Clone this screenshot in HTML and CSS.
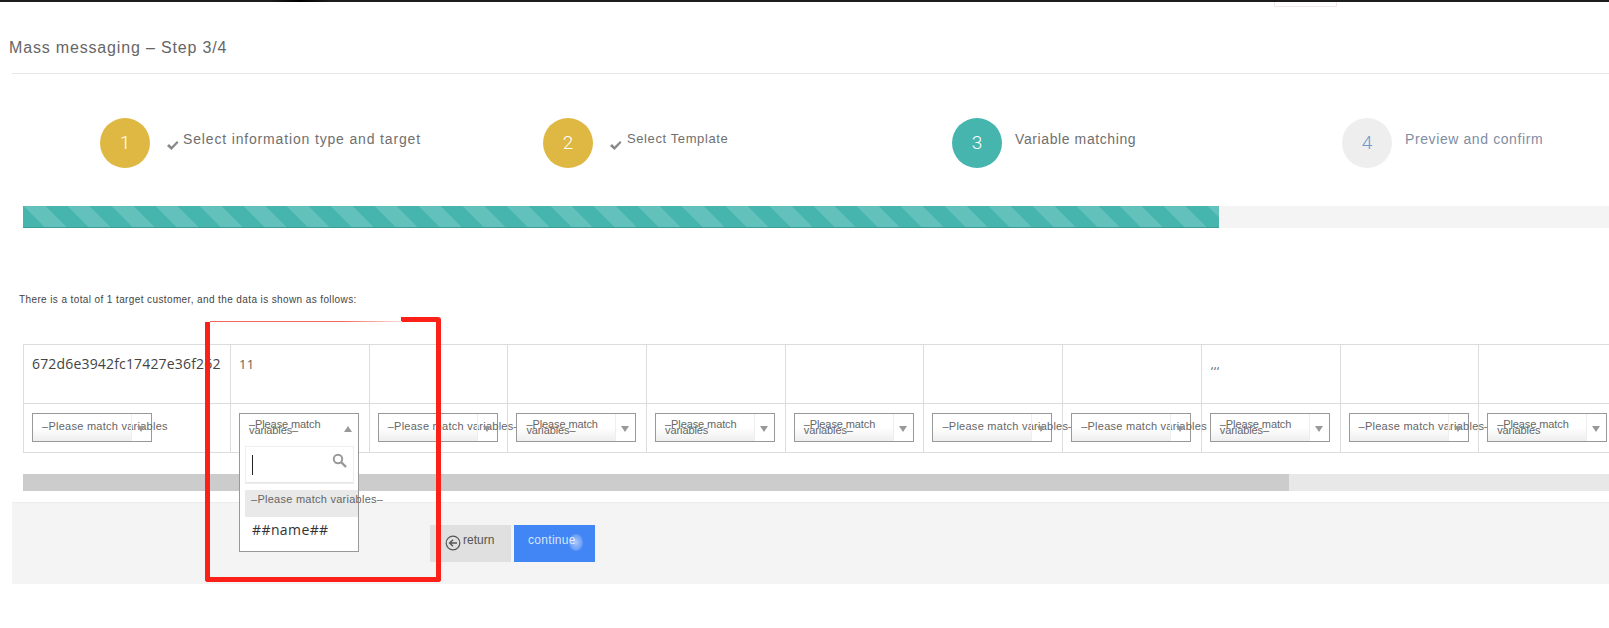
FILE: index.html
```html
<!DOCTYPE html>
<html lang="en">
<head>
  <meta charset="UTF-8" />
  <meta name="viewport" content="width=device-width, initial-scale=1.0" />
  <title>Mass messaging - Step 3/4</title>
  <link rel="stylesheet" href="styles.css">
</head>
<body>

<div class="top-bar"></div>
<div class="top-tab"></div>

<div class="page-head">
  <h1>Mass messaging – Step 3/4</h1>
</div>

<div class="steps">
  <div class="step done">
    <span class="step-num">1</span>
    <span class="step-check"><svg width="13" height="11" viewBox="0 0 13 11"><path d="M1 6l2-2 2.5 2.5L11 1l1.500 1.500L5.500 10z" fill="#888"/></svg></span>
    <span class="step-label">Select information type and target</span>
  </div>
  <div class="step done">
    <span class="step-num">2</span>
    <span class="step-check"><svg width="13" height="11" viewBox="0 0 13 11"><path d="M1 6l2-2 2.500 2.500L11 1l1.500 1.500L5.500 10z" fill="#888"/></svg></span>
    <span class="step-label short">Select Template</span>
  </div>
  <div class="step active">
    <span class="step-num">3</span>
    <span class="step-label">Variable matching</span>
  </div>
  <div class="step todo">
    <span class="step-num">4</span>
    <span class="step-label">Preview and confirm</span>
  </div>
</div>

<div class="progress"><div class="progress-fill"></div></div>

<p class="intro">There is a total of 1 target customer, and the data is shown as follows:</p>

<table class="data-table">
  <colgroup>
    <col class="col-id">
    <col><col><col><col><col><col><col><col><col><col>
  </colgroup>
  <tr class="data-row">
    <td>672d6e3942fc17427e36f262</td>
    <td class="num">11</td>
    <td></td><td></td><td></td><td></td><td></td><td></td>
    <td class="commas">,,,</td>
    <td></td><td></td>
  </tr>
  <tr class="select-row">
    <td><div class="picker"><span class="picker-text line">–Please match variables</span><span class="picker-arrow"></span></div></td>
    <td>
      <div class="picker open">
        <span class="picker-text">–Please match variables–</span><span class="picker-arrow"></span>
        <div class="dropdown">
          <div class="search">
            <span class="caret"></span>
            <svg class="search-icon" width="15" height="15" viewBox="0 0 15 15"><circle cx="6" cy="6" r="4.200" fill="none" stroke="#999" stroke-width="2"/><path d="M9 9l5 5" stroke="#999" stroke-width="2.400"/></svg>
          </div>
          <div class="option current">–Please match variables–</div>
          <div class="option">##name##</div>
        </div>
      </div>
    </td>
    <td><div class="picker"><span class="picker-text line">–Please match variables–</span><span class="picker-arrow"></span></div></td>
    <td><div class="picker"><span class="picker-text">–Please match variables–</span><span class="picker-arrow"></span></div></td>
    <td><div class="picker"><span class="picker-text">–Please match variables</span><span class="picker-arrow"></span></div></td>
    <td><div class="picker"><span class="picker-text">–Please match variables–</span><span class="picker-arrow"></span></div></td>
    <td><div class="picker"><span class="picker-text line">–Please match variables–</span><span class="picker-arrow"></span></div></td>
    <td><div class="picker"><span class="picker-text line">–Please match variables</span><span class="picker-arrow"></span></div></td>
    <td><div class="picker"><span class="picker-text">–Please match variables–</span><span class="picker-arrow"></span></div></td>
    <td><div class="picker"><span class="picker-text line">–Please match variables–</span><span class="picker-arrow"></span></div></td>
    <td><div class="picker"><span class="picker-text">–Please match variables</span><span class="picker-arrow"></span></div></td>
  </tr>
</table>

<div class="scrollbar"><div class="scroll-thumb"></div></div>

<div class="footer">
  <button class="btn btn-return">
    <svg width="16" height="16" viewBox="0 0 16 16"><circle cx="8" cy="8" r="6.800" fill="none" stroke="#555" stroke-width="1.200"/><path d="M12 8H5M8 4.800L4.600 8 8 11.200" fill="none" stroke="#555" stroke-width="1.400"/></svg>
    <span>return</span>
  </button>
  <button class="btn btn-continue">continue<span class="cursor-spot"></span></button>
</div>

<!-- red annotation drawn over the screenshot -->
<div class="mark"></div>

</body>
</html>
```

FILE: styles.css
```css
html, body {
  height: 628px;
  overflow: hidden;
}

body {
  margin: 0;
  position: relative;
  background: #fff;
  font-family: "Liberation Sans", Arial, sans-serif;
  color: #555;
}

.top-bar {
  height: 2px;
  background: linear-gradient(90deg, #1c1c1c 270px, #000 300px, #1c1c1c 330px);
}

.top-tab {
  width: 61px;
  height: 4px;
  margin-left: 1274px;
  border: 1px solid #f3e6ea;
  border-top: none;
}

.page-head {
  height: 66px;
  margin-left: 12px;
  border-bottom: 1px solid #e8e8e8;
}

.page-head h1 {
  margin: 0 0 0 -3px;
  padding-top: 31px;
  font-size: 16px;
  line-height: 20px;
  font-weight: normal;
  letter-spacing: 0.830px;
  color: #666;
}

/* steps */
.steps {
  display: grid;
  grid-template-columns: 443px 409px 390px 1fr;
  padding-left: 100px;
  margin-top: 44px;
}

.step {
  display: flex;
  align-items: flex-start;
}

.step-num {
  flex: none;
  width: 50px;
  height: 50px;
  border-radius: 50%;
  font-family: Roboto, sans-serif;
  font-weight: 300;
  font-size: 19px;
  line-height: 50px;
  text-align: center;
  color: #fff;
}

.done .step-num { background: #dfb844; }
.active .step-num { background: #45b5ae; }
.todo .step-num { background: #eee; color: #6c9bcb; }

.step-check {
  margin: 22px 4px 0 16px;
  line-height: 11px;
}

.step-label {
  margin: 12px 0 0 13px;
  font-size: 14px;
  line-height: 18px;
  letter-spacing: 0.600px;
  color: #6f6f6f;
}

.done .step-label { margin-left: 0; letter-spacing: 0.840px; }
.done .step-label.short { font-size: 13px; margin-left: 1px; letter-spacing: 0.600px; }
.todo .step-label { color: #7f8da3; }

/* progress */
.progress {
  height: 22px;
  margin: 38px 0 0 23px;
  background: #f4f4f4;
}

.progress-fill {
  width: 1196px;
  height: 22px;
  box-sizing: border-box;
  border-bottom: 1px solid #3a9d97;
  background: repeating-linear-gradient(45deg, #45b5ae 0, #45b5ae 15.500px, #63c1bb 15.500px, #63c1bb 31px);
}

.intro {
  margin: 66px 0 0 19px;
  font-size: 10px;
  line-height: 12px;
  letter-spacing: 0.390px;
  color: #444;
}

/* table */
.data-table {
  width: 1594px;
  margin: 38px 0 0 23px;
  table-layout: fixed;
  border-collapse: collapse;
}

.data-table col { width: 138.700px; }
.data-table col.col-id { width: 207px; }

.data-table td {
  border: 1px solid #dcdcdc;
  box-sizing: border-box;
  padding: 0 0 0 8px;
  vertical-align: top;
}

.data-row td {
  height: 59px;
  padding-top: 9px;
  font-family: "Open Sans", sans-serif;
  font-size: 14px;
  line-height: 20px;
  letter-spacing: 0.170px;
  color: #444;
}

.data-row td.num { color: #665; font-size: 13px; letter-spacing: 0.250px; }
.data-row td.commas { font-size: 11px; padding-top: 10px; padding-left: 9px; }

.select-row td {
  height: 49px;
  padding-top: 9px;
}

.picker {
  position: relative;
  display: flex;
  width: 120px;
  height: 29px;
  box-sizing: border-box;
  border: 1px solid #999;
  background: #fff;
}

.picker-text {
  flex: 1;
  min-width: 0;
  padding: 7px 0 0 9px;
  font-size: 11px;
  line-height: 6px;
  letter-spacing: -0.100px;
  color: #666;
  background: linear-gradient(#fff 50%, #eee);
}

.picker-text.line {
  padding-top: 5px;
  font-size: 11px;
  line-height: 14px;
  white-space: nowrap;
  letter-spacing: 0.260px;
}

.picker-arrow {
  position: relative;
  flex: none;
  width: 19px;
  border-left: 1px solid #eee;
}

.picker-arrow::after {
  content: "";
  position: absolute;
  left: 5px;
  top: 12px;
  border: 4px solid transparent;
  border-top: 6px solid #999;
  border-bottom: none;
}

.open.picker {
  border-bottom: none;
  z-index: 2;
}

.open .picker-text { background: #fff; }
.open .picker-arrow { border-left: none; }

.open .picker-arrow::after {
  border-top: none;
  border-bottom: 6px solid #999;
}

.dropdown {
  position: absolute;
  left: -1px;
  top: 28px;
  width: 118px;
  height: 109px;
  border: 1px solid #999;
  border-top: none;
  background: #fff;
}

.search {
  position: relative;
  height: 36px;
  margin: 4px 4px 0 5px;
  border: 1px solid #eee;
  box-shadow: inset 0 -1px 0 #e4e4e4;
}

.caret {
  position: absolute;
  left: 6px;
  top: 8px;
  width: 1px;
  height: 20px;
  background: #222;
}

.search-icon {
  position: absolute;
  right: 6px;
  top: 6px;
}

.option {
  height: 26px;
  margin-left: 5px;
  padding-left: 7px;
  font-family: "Open Sans", sans-serif;
  font-size: 14px;
  line-height: 25px;
  letter-spacing: 0.400px;
  white-space: nowrap;
  color: #333;
}

.option.current {
  height: 27px;
  margin-top: 6px;
  padding-left: 6px;
  font-family: "Liberation Sans", Arial, sans-serif;
  font-size: 11px;
  line-height: 18px;
  letter-spacing: 0.260px;
  color: #666;
  background: #e9e9e9;
}

/* scroll + footer */
.scrollbar {
  height: 17px;
  margin: 21px 0 0 23px;
  background: #e8e8e8;
}

.scroll-thumb {
  width: 1266px;
  height: 17px;
  background: #ccc;
}

.footer {
  display: flex;
  gap: 3px;
  height: 82px;
  box-sizing: border-box;
  margin: 11px 0 0 12px;
  padding: 22px 0 0 418px;
  background: #f4f4f4;
  border-top: 1px solid #ececec;
}

.btn {
  position: relative;
  display: flex;
  align-items: flex-start;
  width: 81px;
  height: 37px;
  border: none;
  padding: 8px 0 0 15px;
  font-family: "Liberation Sans", Arial, sans-serif;
  font-size: 12px;
  line-height: 14px;
}

.btn-return {
  gap: 2px;
  background: #e0e0e0;
  color: #555;
}

.btn-return svg { margin-top: 2px; }

.btn-continue {
  padding-left: 14px;
  background: #4285f4;
  color: #d6e4fb;
  letter-spacing: 0.300px;
}

.cursor-spot {
  position: absolute;
  left: 55px;
  top: 9px;
  width: 14px;
  height: 17px;
  border-radius: 50%;
  background: radial-gradient(rgba(255, 255, 255, 0.55), rgba(255, 255, 255, 0));
}

/* annotation */
.mark {
  position: absolute;
  left: 205px;
  top: 322px;
  width: 226px;
  height: 255px;
  border: 5px solid #fb2119;
  border-top: none;
  border-radius: 0 0 3px 3px;
  z-index: 5;
}

.mark::before {
  content: "";
  position: absolute;
  right: -5px;
  top: -5px;
  width: 40px;
  height: 5px;
  background: #fb2119;
  border-radius: 0 3px 0 0;
}

.mark::after {
  content: "";
  position: absolute;
  left: 0;
  top: -1px;
  width: 192px;
  height: 1px;
  background: linear-gradient(90deg, #f56a5f 70%, #fde0da);
}
```
